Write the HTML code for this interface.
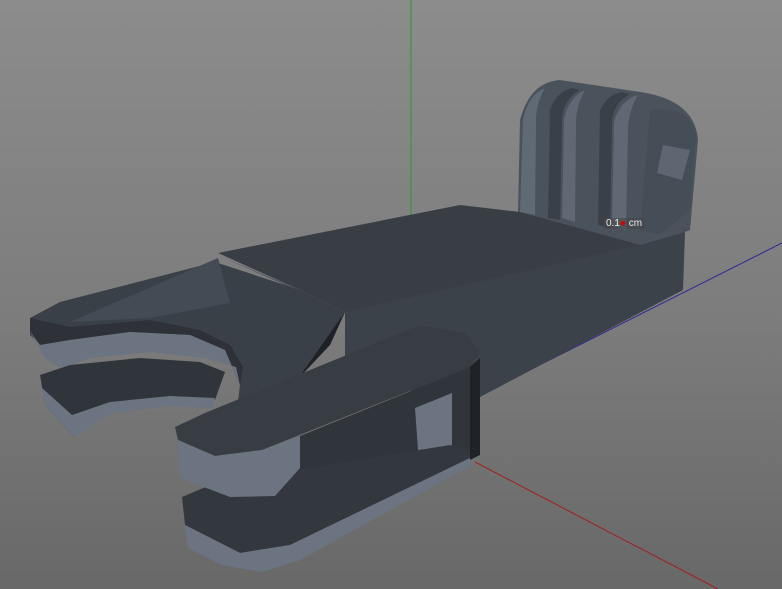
<!DOCTYPE html>
<html><head><style>
html,body{margin:0;padding:0;width:782px;height:589px;overflow:hidden}
body{background:linear-gradient(#8c8c8c,#7c7c7c 55%,#686868)}
svg{position:absolute;left:0;top:0}
.lbl{position:absolute;left:604px;top:218px;font:10px "Liberation Sans",sans-serif;color:#eee;background:rgba(70,70,70,.6);padding:0 2px}
</style></head><body>
<svg width="782" height="589" viewBox="0 0 782 589">
<line x1="411" y1="0" x2="411" y2="215" stroke="#2c9a2c" stroke-width="1"/>
<line x1="480" y1="395" x2="782" y2="243" stroke="#2a2a90" stroke-width="1"/>
<line x1="475" y1="462" x2="718" y2="589" stroke="#a02020" stroke-width="1"/>
<!-- gopro tabs -->
<path d="M518,215 L520,120 Q530,82 560,80 L640,92 Q695,100 698,140 L690,230 L640,250 Z" fill="#4a525c"/>
<path d="M548,218 L550,110 Q556,92 572,88 L580,90 Q562,100 562,122 L560,220 Z" fill="#3a4047"/>
<path d="M598,225 L600,110 Q608,94 622,92 L630,94 Q612,104 612,124 L610,228 Z" fill="#3a4047"/>
<path d="M520,212 L523,120 Q528,95 545,88 Q535,105 536,125 L535,215 Z" fill="#606a75"/>
<path d="M562,218 L564,120 Q568,98 585,90 Q575,108 576,128 L575,222 Z" fill="#5f6873"/>
<path d="M612,226 L614,122 Q620,100 638,95 Q628,112 628,130 L626,230 Z" fill="#5f6873"/>
<path d="M650,110 Q690,105 696,135 L690,210 L660,235 L640,230 Z" fill="#454d57"/>
<path d="M663,145 L690,150 L682,180 L657,173 Z" fill="#5d6671"/>
<!-- body side -->
<path d="M345,310 L640,245 L685,232 L683,290 L480,397 L345,385 Z" fill="#3c424a"/>
<!-- body top -->
<path d="M218,253 L460,205 L520,212 L640,245 L345,312 L300,290 Z" fill="#393e45"/>
<path d="M220,256 L345,312 L330,345 L300,290 Z" fill="#4c545e"/>
<path d="M345,312 L330,345 L250,430 L290,370 Z" fill="#1e2228"/>
<!-- left fork lower arm -->
<path d="M40,375 L70,365 L140,358 L200,362 L225,372 L215,400 L170,397 L110,404 L72,418 L75,438 L45,405 Z" fill="#30353b"/>
<path d="M40,380 L45,405 L75,438 L110,414 L170,406 L212,408 L215,398 L170,396 L110,402 L72,415 L42,388 Z" fill="#6b7480"/>
<!-- left fork upper arm -->
<path d="M30,318 L60,302 L215,262 L300,290 L345,312 L262,430 L235,425 L240,385 L225,350 L190,335 L130,332 L70,340 L40,345 L30,335 Z" fill="#3a4047"/>
<path d="M70,322 L218,258 L230,303 L150,318 Z" fill="#444b54"/>
<path d="M30,330 L40,345 L70,340 L130,332 L190,335 L225,350 L240,385 L243,367 L230,345 L200,330 L150,320 L70,327 L30,318 Z" fill="#2e3238"/>
<path d="M30,332 L40,345 L70,340 L130,332 L190,335 L225,350 L240,385 L236,367 L205,358 L150,352 L90,358 L60,368 L45,358 Z" fill="#6b7480"/>
<!-- block underside -->
<path d="M290,440 L470,367 L470,452 L290,482 Z" fill="#30353b"/>
<path d="M415,408 L452,393 L452,447 L418,450 Z" fill="#6b7480"/>
<!-- lower arm of block -->
<path d="M182,497 L215,483 L450,445 L470,450 L470,458 L290,545 L240,553 L185,525 Z" fill="#33383e"/>
<path d="M185,525 L240,553 L290,545 L470,458 L470,466 L300,560 L262,572 L222,565 L188,548 Z" fill="#6b7480"/>
<!-- front block top -->
<path d="M175,427 L205,413 L420,325 L465,333 L480,352 L470,367 L262,450 L215,456 L178,440 Z" fill="#383d44"/>
<path d="M178,440 L215,456 L262,450 L300,436 L300,468 L275,496 L230,497 L180,478 Z" fill="#6b7480"/>
<path d="M470,367 L480,358 L480,455 L470,460 Z" fill="#1f2328"/>
</svg>
<div class="lbl">0.1<span style="color:#d00">●</span> cm</div>
</body></html>
